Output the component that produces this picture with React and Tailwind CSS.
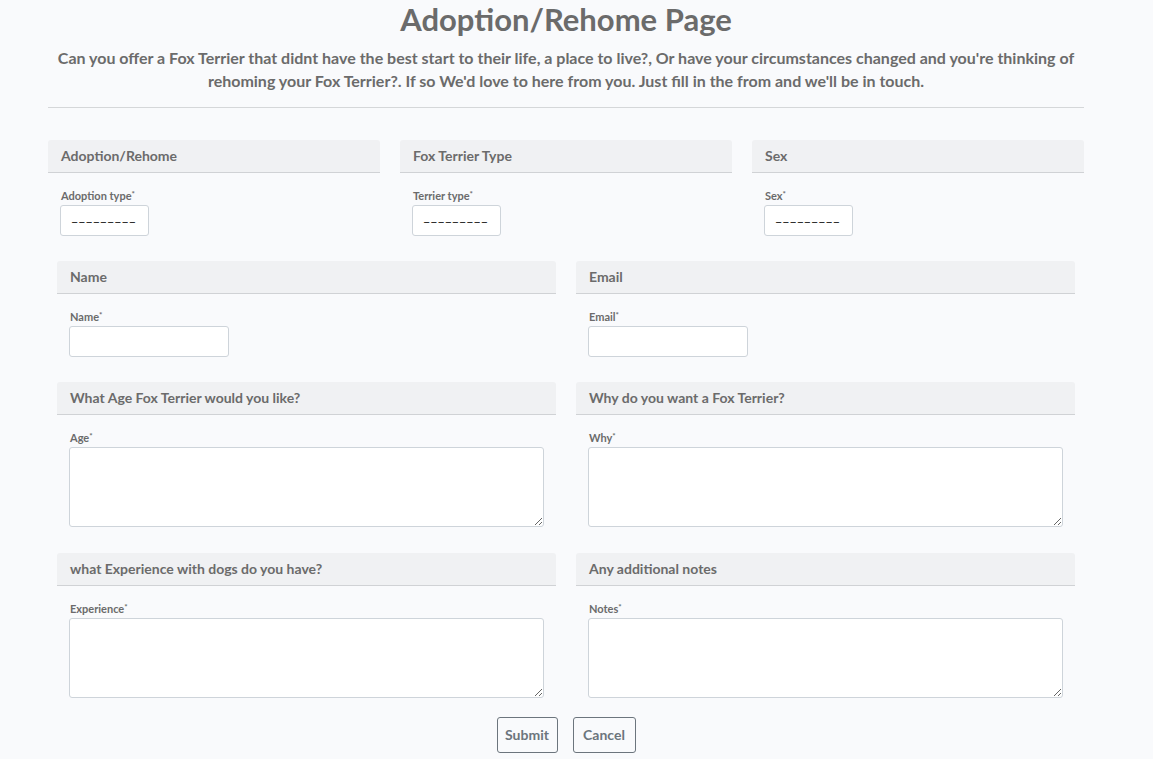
const fieldClass =
  "block rounded-[3px] border border-[#ced4da] bg-white text-sm text-black outline-none focus:border-[#80bdff]";

function Card({ title, id, label, children }) {
  return (
    <section className="min-w-0">
      <h2 className="rounded-t-[3px] border-b border-[#d0d2d5] bg-[#f0f1f3] px-[13px] py-1 text-sm leading-6 font-bold">
        {title}
      </h2>
      <div className="px-3 pt-[13px]">
        <label htmlFor={id} className="block pl-px text-[11px] leading-[19px] font-bold">
          {label}
          <span className="align-top text-[8px] leading-4">*</span>
        </label>
        {children}
      </div>
    </section>
  );
}

function SelectCard({ title, id, label, options }) {
  return (
    <Card title={title} id={id} label={label}>
      <select
        id={id}
        name={id}
        className={`${fieldClass} h-[31px] w-[89px] appearance-none px-2.5 font-['DejaVu_Sans',sans-serif] text-[20px] leading-7 font-extralight`}
      >
        <option value="">---------</option>
        {options.map((option) => (
          <option key={option}>{option}</option>
        ))}
      </select>
    </Card>
  );
}

function InputCard({ title, id, label, type }) {
  return (
    <Card title={title} id={id} label={label}>
      <input id={id} name={id} type={type} className={`${fieldClass} h-[31px] w-40 px-2`} />
    </Card>
  );
}

function TextareaCard({ title, id, label }) {
  return (
    <Card title={title} id={id} label={label}>
      <textarea id={id} name={id} className={`${fieldClass} mb-px h-20 w-full resize px-2 py-1`} />
    </Card>
  );
}

const buttonClass =
  "h-9 rounded-[3px] border border-[#6c757d] text-sm leading-6 font-bold text-[#6c757d] hover:bg-[#6c757d] hover:text-white";

export default function App() {
  return (
    <main className="min-h-screen bg-[#f9fafc] pr-[69px] pb-1.5 pl-12 font-['Lato',sans-serif] text-[#6b6b6b]">
      <header className="border-b border-[#d5d7d9] pb-[15px] text-center font-bold">
        <h1 className="pb-2 text-[31px] leading-[38px]">Adoption/Rehome Page</h1>
        <p className="text-base leading-[23px]">
          Can you offer a Fox Terrier that didnt have the best start to their life, a place to live?, Or have your
          circumstances changed and you're thinking of rehoming your Fox Terrier?. If so We'd love to here from you.
          Just fill in the from and we'll be in touch.
        </p>
      </header>
      <form className="pt-8" onSubmit={(event) => event.preventDefault()}>
        <div className="grid grid-cols-3 gap-x-5">
          <SelectCard
            title="Adoption/Rehome"
            id="adoption_type"
            label="Adoption type"
            options={["Adopt", "Rehome"]}
          />
          <SelectCard title="Fox Terrier Type" id="terrier_type" label="Terrier type" options={["Smooth", "Wire"]} />
          <SelectCard title="Sex" id="sex" label="Sex" options={["Male", "Female"]} />
        </div>
        <div className="grid grid-cols-2 gap-x-5 gap-y-[25px] px-[9px] pt-[25px]">
          <InputCard title="Name" id="name" label="Name" type="text" />
          <InputCard title="Email" id="email" label="Email" type="email" />
          <TextareaCard title="What Age Fox Terrier would you like?" id="age" label="Age" />
          <TextareaCard title="Why do you want a Fox Terrier?" id="why" label="Why" />
          <TextareaCard title="what Experience with dogs do you have?" id="experience" label="Experience" />
          <TextareaCard title="Any additional notes" id="notes" label="Notes" />
        </div>
        <div className="flex justify-center gap-[15px] pt-[18px]">
          <button type="submit" className={`${buttonClass} w-[61px]`}>
            Submit
          </button>
          <button type="button" className={`${buttonClass} w-[63px]`}>
            Cancel
          </button>
        </div>
      </form>
    </main>
  );
}
